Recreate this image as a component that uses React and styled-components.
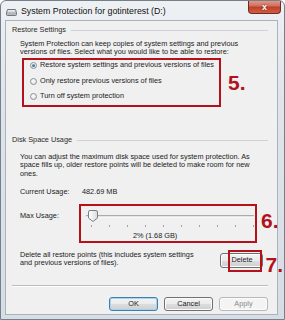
import React from "react";
import styled, { createGlobalStyle, css } from "styled-components";

const GlobalStyle = createGlobalStyle`
  html, body { margin: 0; padding: 0; background: #ffffff; }
  body { font-family: "Liberation Sans", Arial, sans-serif; }
`;

const Window = styled.div`
  box-sizing: border-box;
  width: 285px;
  height: 320px;
  border: 1px solid #76808a;
  border-radius: 6px 6px 0 0;
  background: linear-gradient(180deg, #eef1f4 0%, #dfe5eb 30%, #d6dde4 100%);
  display: flex;
  flex-direction: column;
  overflow: hidden;
`;

const TitleBar = styled.div`
  height: 19px;
  flex: none;
  display: flex;
  align-items: center;
  padding-left: 5px;
`;

const Title = styled.span`
  margin-left: 4px;
  font-size: 8.8px;
  color: #111;
  white-space: nowrap;
`;

const CloseButton = styled.div`
  margin-left: auto;
  margin-right: 3px;
  align-self: flex-start;
  margin-top: -1px;
  width: 33px;
  height: 14px;
  box-sizing: border-box;
  border: 1px solid #6d2b24;
  border-top: none;
  border-radius: 0 0 4px 4px;
  background: linear-gradient(180deg, #e3a08f 0%, #d2705c 45%, #c0402b 55%, #cf5e3f 100%);
  display: flex;
  align-items: center;
  justify-content: center;
  color: #fff;
  font-size: 9px;
  font-weight: bold;
  text-shadow: 0 0 2px #5a1a10;
`;

const Panel = styled.div`
  flex: 1;
  margin: 0 6px 4px 4px;
  border: 1px solid #aab3bc;
  background: #f0f0f0;
  padding: 0 9px 0 6px;
  display: flex;
  flex-direction: column;
  font-size: 7.3px;
  line-height: 8.5px;
  color: #1b1b1b;
`;

const GroupHeader = styled.div`
  display: flex;
  align-items: center;
  height: 10px;
  margin-top: ${(p) => p.$top}px;
  color: #2a2a2a;
  white-space: nowrap;
  &::after {
    content: "";
    flex: 1;
    margin-left: 5px;
    height: 1px;
    background: #cdd3d8;
  }
`;

const Desc = styled.p`
  margin: ${(p) => p.$top}px 0 0 8px;
  white-space: nowrap;
`;

const AnnotatedRow = styled.div`
  display: flex;
  align-items: ${(p) => p.$align || "center"};
  margin-top: ${(p) => p.$top}px;
  margin-left: ${(p) => p.$left || 0}px;
  margin-right: ${(p) => p.$right || 0}px;
`;

const RedBox = styled.div`
  border: 2px solid #b3121c;
  box-sizing: border-box;
`;

const RadioBox = styled(RedBox)`
  width: 199px;
  padding: 1px 0 4px 5.5px;
  display: flex;
  flex-direction: column;
  gap: 6.5px;
`;

const RadioRow = styled.label`
  display: flex;
  align-items: center;
  height: 9px;
  gap: 3.5px;
  white-space: nowrap;
`;

const Radio = styled.span`
  position: relative;
  flex: none;
  width: 7px;
  height: 7px;
  box-sizing: border-box;
  border-radius: 50%;
  border: 1px solid #8a9096;
  background: radial-gradient(circle at 40% 35%, #ffffff 0%, #e4e6e8 70%, #d0d3d6 100%);
  ${(p) =>
    p.$checked &&
    css`
      &::after {
        content: "";
        position: absolute;
        left: 1px;
        top: 1px;
        width: 3px;
        height: 3px;
        border-radius: 50%;
        background: radial-gradient(circle at 40% 35%, #6fa2c8 0%, #21486b 100%);
      }
    `}
`;

const Marker = styled.span`
  font-family: "Liberation Sans", Arial, sans-serif;
  font-weight: bold;
  font-size: 21px;
  line-height: 18px;
  color: #b3121c;
  margin-left: ${(p) => p.$gap}px;
  margin-top: ${(p) => p.$top || 0}px;
  white-space: nowrap;
`;

const InfoRow = styled.div`
  display: flex;
  align-items: center;
  height: 9px;
  margin: ${(p) => p.$top}px 0 0 8px;
  white-space: nowrap;
`;

const Label = styled.span`
  width: ${(p) => p.$w}px;
  flex: none;
  box-sizing: border-box;
  padding-left: ${(p) => p.$indent || 0}px;
  margin-top: ${(p) => p.$top || 0}px;
  white-space: nowrap;
`;

const SliderBox = styled(RedBox)`
  width: 183px;
  padding: 4px 1px 0.75px 0;
  display: flex;
  flex-direction: column;
`;

const SliderArea = styled.div`
  position: relative;
  height: 12px;
  padding-left: 5px;
`;

const Track = styled.div`
  margin-top: 5px;
  height: 3px;
  box-sizing: border-box;
  border-top: 1px solid #a7abae;
  border-bottom: 1px solid #f7f7f7;
  background: #e2e4e6;
`;

const ThumbSvg = styled.svg`
  position: absolute;
  left: 7px;
  top: 0;
`;

const Ticks = styled.div`
  margin: 3px 0 0 10px;
  width: 163px;
  height: 2px;
  display: flex;
  justify-content: space-between;
`;

const Tick = styled.span`
  width: 1px;
  height: 2px;
  background: #a3a3a3;
`;

const SliderValue = styled.div`
  margin-top: 4.75px;
  padding-left: 52px;
  white-space: nowrap;
`;

const DeleteText = styled.p`
  margin: 0 0 0 8px;
  white-space: nowrap;
  flex: 1;
`;

const ButtonWrap = styled.div`
  position: relative;
  margin-top: 2.25px;
`;

const Overlay = styled.div`
  position: absolute;
  left: 8px;
  right: 1px;
  top: -3px;
  bottom: -4px;
  border: 2px solid #b3121c;
`;

const Button = styled.div`
  box-sizing: border-box;
  width: ${(p) => p.$w || 49}px;
  height: ${(p) => p.$h || 14}px;
  border: 1px solid ${(p) => (p.$default ? "#3c7fb1" : p.$disabled ? "#b5b9bc" : "#707070")};
  border-radius: 3px;
  background: ${(p) =>
    p.$disabled
      ? "#f4f4f4"
      : "linear-gradient(180deg, #f3f3f3 0%, #ebebeb 50%, #dddddd 51%, #cfcfcf 100%)"};
  box-shadow: ${(p) => (p.$default ? "inset 0 0 0 1px #a6d4f2" : "inset 0 0 0 1px #fcfcfc")};
  display: flex;
  align-items: center;
  justify-content: center;
  font-size: 7.3px;
  color: ${(p) => (p.$disabled ? "#8a8a8a" : "#1b1b1b")};
`;

const Separator = styled.div`
  margin-top: 11px;
  height: 0;
  border-top: 1px solid #b9bcc0;
  border-bottom: 1px solid #ffffff;
`;

const ButtonBar = styled.div`
  display: flex;
  justify-content: flex-end;
  gap: 6px;
  margin-top: 10px;
`;

const DriveIcon = () => (
  <svg width="11" height="8" viewBox="0 0 11 8" style={{ marginTop: 3 }}>
    <defs>
      <linearGradient id="drv" x1="0" y1="0" x2="0" y2="1">
        <stop offset="0" stopColor="#f4f5f6" />
        <stop offset="1" stopColor="#a9afb5" />
      </linearGradient>
    </defs>
    <path d="M1.5 1.5 H9.5 L10.5 5 V6.5 Q10.5 7.5 9.5 7.5 H1.5 Q0.5 7.5 0.5 6.5 V5 Z" fill="url(#drv)" stroke="#6f767d" strokeWidth="1" />
    <line x1="1" y1="5" x2="10" y2="5" stroke="#8d949a" strokeWidth="0.6" />
  </svg>
);

const Thumb = () => (
  <ThumbSvg width="10" height="12" viewBox="0 0 10 12">
    <defs>
      <linearGradient id="thm" x1="0" y1="0" x2="1" y2="0">
        <stop offset="0" stopColor="#ffffff" />
        <stop offset="1" stopColor="#d9dcdf" />
      </linearGradient>
    </defs>
    <path d="M2 0.5 H8 Q9.5 0.5 9.5 2 V8 L5 11.5 L0.5 8 V2 Q0.5 0.5 2 0.5 Z" fill="url(#thm)" stroke="#7a7f84" strokeWidth="1" />
  </ThumbSvg>
);

const ticks = Array.from({ length: 10 }, (_, i) => i);

export default function App() {
  return (
    <>
      <GlobalStyle />
      <Window>
        <TitleBar>
          <DriveIcon />
          <Title>System Protection for gotinterest (D:)</Title>
          <CloseButton>x</CloseButton>
        </TitleBar>
        <Panel>
          <GroupHeader $top={4}>Restore Settings</GroupHeader>
          <Desc $top={4.75}>
            System Protection can keep copies of system settings and previous
            <br />
            versions of files. Select what you would like to be able to restore:
          </Desc>
          <AnnotatedRow $top={1.25} $left={10}>
            <RadioBox>
              <RadioRow>
                <Radio $checked />
                Restore system settings and previous versions of files
              </RadioRow>
              <RadioRow>
                <Radio />
                Only restore previous versions of files
              </RadioRow>
              <RadioRow>
                <Radio />
                Turn off system protection
              </RadioRow>
            </RadioBox>
            <Marker $gap={7}>5.</Marker>
          </AnnotatedRow>

          <GroupHeader $top={28}>Disk Space Usage</GroupHeader>
          <Desc $top={7.75}>
            You can adjust the maximum disk space used for system protection. As
            <br />
            space fills up, older restore points will be deleted to make room for new
            <br />
            ones.
          </Desc>
          <InfoRow $top={9.25}>
            <Label $w={62}>Current Usage:</Label>
            482.69 MB
          </InfoRow>
          <AnnotatedRow $top={7.5} $align="flex-start">
            <Label $w={67} $indent={8} $top={7.75}>
              Max Usage:
            </Label>
            <SliderBox>
              <SliderArea>
                <Track />
                <Thumb />
              </SliderArea>
              <Ticks>
                {ticks.map((t) => (
                  <Tick key={t} />
                ))}
              </Ticks>
              <SliderValue>2% (1.68 GB)</SliderValue>
            </SliderBox>
            <Marker $gap={4} $top={8}>6.</Marker>
          </AnnotatedRow>

          <AnnotatedRow $top={7.75} $align="flex-start" $right={-15}>
            <DeleteText>
              Delete all restore points (this includes system settings
              <br />
              and previous versions of files).
            </DeleteText>
            <ButtonWrap>
              <Button $w={43} $h={15}>Delete</Button>
              <Overlay />
            </ButtonWrap>
            <Marker $gap={2} $top={5}>7.</Marker>
          </AnnotatedRow>

          <Separator />
          <ButtonBar>
            <Button $default>OK</Button>
            <Button>Cancel</Button>
            <Button $disabled>Apply</Button>
          </ButtonBar>
        </Panel>
      </Window>
    </>
  );
}
